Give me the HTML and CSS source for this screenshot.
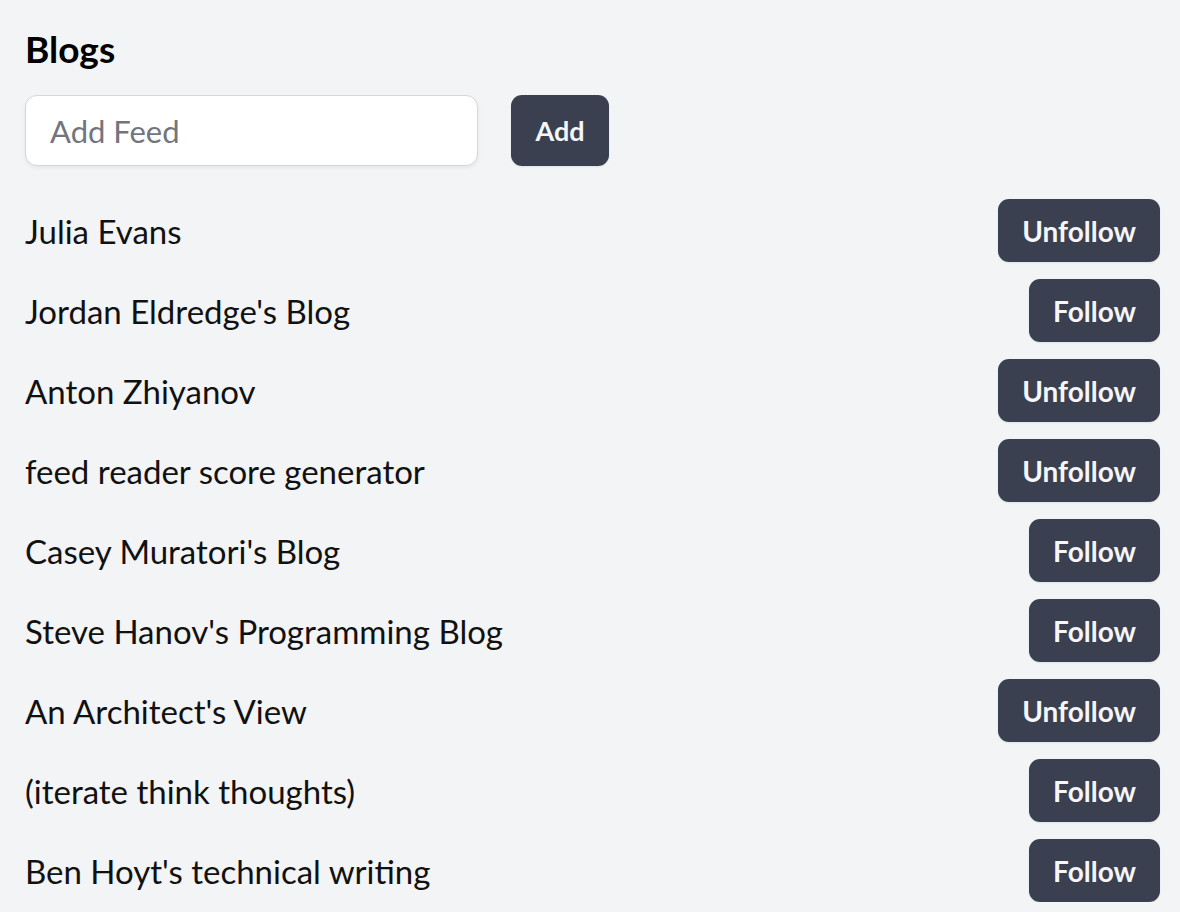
FILE: index.html
```html
<!DOCTYPE html>
<html>
<head>
<meta charset="utf-8">
<title>Blogs</title>
<link rel="stylesheet" href="styles.css">
</head>
<body>
<main class="page">
  <h1 class="title">Blogs</h1>
  <form class="add-form">
    <input class="feed-input" type="text" placeholder="Add Feed">
    <button class="btn btn-add" type="button">Add</button>
  </form>
  <ul class="blog-list">
    <li class="blog-row"><span class="blog-name">Julia Evans</span><button class="btn" type="button">Unfollow</button></li>
    <li class="blog-row"><span class="blog-name">Jordan Eldredge's Blog</span><button class="btn" type="button">Follow</button></li>
    <li class="blog-row"><span class="blog-name">Anton Zhiyanov</span><button class="btn" type="button">Unfollow</button></li>
    <li class="blog-row"><span class="blog-name">feed reader score generator</span><button class="btn" type="button">Unfollow</button></li>
    <li class="blog-row"><span class="blog-name">Casey Muratori's Blog</span><button class="btn" type="button">Follow</button></li>
    <li class="blog-row"><span class="blog-name">Steve Hanov's Programming Blog</span><button class="btn" type="button">Follow</button></li>
    <li class="blog-row"><span class="blog-name">An Architect's View</span><button class="btn" type="button">Unfollow</button></li>
    <li class="blog-row"><span class="blog-name">(iterate think thoughts)</span><button class="btn" type="button">Follow</button></li>
    <li class="blog-row"><span class="blog-name">Ben Hoyt's technical writing</span><button class="btn" type="button">Follow</button></li>
  </ul>
</main>
</body>
</html>
```
FILE: styles.css
```css
html, body {
  margin: 0;
  padding: 0;
  background: #f3f4f6;
}
body {
  font-family: Lato, "Liberation Sans", sans-serif;
  color: #111;
}
.page {
  padding: 29px 20px 0 25px;
}
.title {
  margin: 0 0 26px;
  font-size: 37px;
  line-height: 40px;
  font-weight: 700;
  color: #000;
}
.add-form {
  display: flex;
  align-items: center;
  gap: 33px;
  margin: 0 0 33px;
}
.feed-input {
  box-sizing: border-box;
  width: 453px;
  height: 71px;
  padding: 0 24px;
  border: 1px solid #d4d6db;
  border-radius: 12px;
  background: #fff;
  box-shadow: 0 2px 4px rgba(0, 0, 0, 0.06);
  font-family: Lato, "Liberation Sans", sans-serif;
  font-size: 31px;
  color: #111;
  outline: none;
}
.feed-input::placeholder {
  color: #72757d;
}
.btn {
  box-sizing: border-box;
  height: 63px;
  padding: 0 24px;
  border: none;
  border-radius: 11px;
  background: #3b4050;
  color: #f5f6f8;
  font-family: Lato, "Liberation Sans", sans-serif;
  font-size: 28px;
  font-weight: 700;
  cursor: pointer;
  box-shadow: 0 1px 2px rgba(0, 0, 0, 0.08);
}
.btn-add {
  height: 71px;
  width: 98px;
  padding: 0;
  font-size: 27px;
}
.blog-list {
  list-style: none;
  margin: 0;
  padding: 0;
  display: flex;
  flex-direction: column;
  gap: 17px;
}
.blog-row {
  display: flex;
  align-items: center;
  justify-content: space-between;
}
.blog-name {
  font-size: 33px;
}
```
